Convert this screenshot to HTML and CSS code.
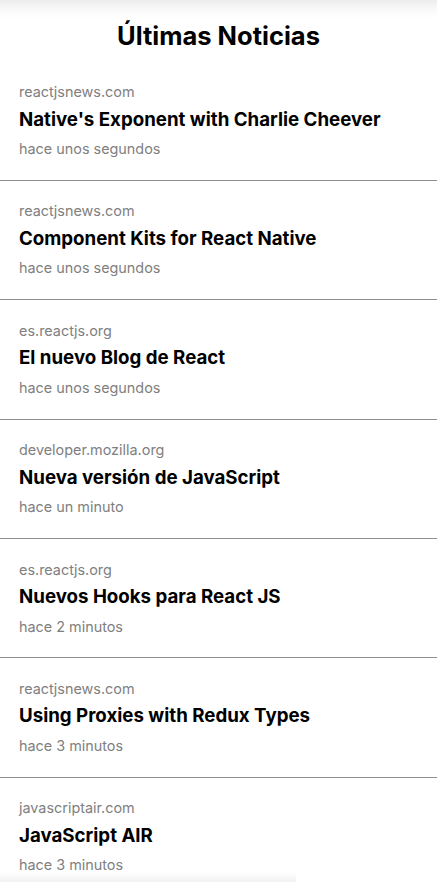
FILE: index.html
```html
<!DOCTYPE html>
<html lang="es">
<head>
<meta charset="utf-8">
<title>Últimas Noticias</title>
<link rel="stylesheet" href="styles.css">
</head>
<body>
<header class="header">
  <h1 class="header-title">Últimas Noticias</h1>
</header>
<ul class="news-list">
  <li class="news-item">
    <div class="news-source">reactjsnews.com</div>
    <div class="news-title">Native's Exponent with Charlie Cheever</div>
    <div class="news-time">hace unos segundos</div>
  </li>
  <li class="news-item">
    <div class="news-source">reactjsnews.com</div>
    <div class="news-title">Component Kits for React Native</div>
    <div class="news-time">hace unos segundos</div>
  </li>
  <li class="news-item">
    <div class="news-source">es.reactjs.org</div>
    <div class="news-title">El nuevo Blog de React</div>
    <div class="news-time">hace unos segundos</div>
  </li>
  <li class="news-item">
    <div class="news-source">developer.mozilla.org</div>
    <div class="news-title">Nueva versión de JavaScript</div>
    <div class="news-time">hace un minuto</div>
  </li>
  <li class="news-item">
    <div class="news-source">es.reactjs.org</div>
    <div class="news-title">Nuevos Hooks para React JS</div>
    <div class="news-time">hace 2 minutos</div>
  </li>
  <li class="news-item">
    <div class="news-source">reactjsnews.com</div>
    <div class="news-title">Using Proxies with Redux Types</div>
    <div class="news-time">hace 3 minutos</div>
  </li>
  <li class="news-item">
    <div class="news-source">javascriptair.com</div>
    <div class="news-title">JavaScript AIR</div>
    <div class="news-time">hace 3 minutos</div>
  </li>
</ul>
<div class="bottom-fade"></div>
</body>
</html>
```
FILE: styles.css
```css
* { box-sizing: border-box; }
html, body {
  margin: 0;
  padding: 0;
  background: #fff;
  overflow: hidden;
}
body {
  font-family: Inter, "Liberation Sans", sans-serif;
  color: #000;
  height: 882px;
}
.header {
  height: 61.5px;
  display: flex;
  align-items: center;
  justify-content: center;
  background: linear-gradient(#ececec 0px, #fafafa 10px, #ffffff 20px);
  padding-top: 10px;
}
.header-title {
  margin: 0;
  font-size: 25.5px;
  font-weight: 700;
  line-height: 30px;
  letter-spacing: 0;
}
.news-list {
  list-style: none;
  margin: 0;
  padding: 0;
}
.news-item {
  display: flex;
  flex-direction: column;
  padding: 21.5px 19px 21.9px;
  border-bottom: 1px solid #8e8e8e;
}
.news-source {
  font-size: 14.4px;
  line-height: 18px;
  color: #808080;
}
.news-title {
  margin-top: 6.5px;
  font-size: 18.7px;
  font-weight: 700;
  line-height: 24px;
}
.news-time {
  margin-top: 8.5px;
  font-size: 14.4px;
  line-height: 18px;
  color: #808080;
}
.bottom-fade {
  position: fixed;
  left: 0;
  bottom: 0;
  width: 296px;
  height: 10px;
  background: linear-gradient(rgba(240,240,240,0), #f2f2f2);
}
```
